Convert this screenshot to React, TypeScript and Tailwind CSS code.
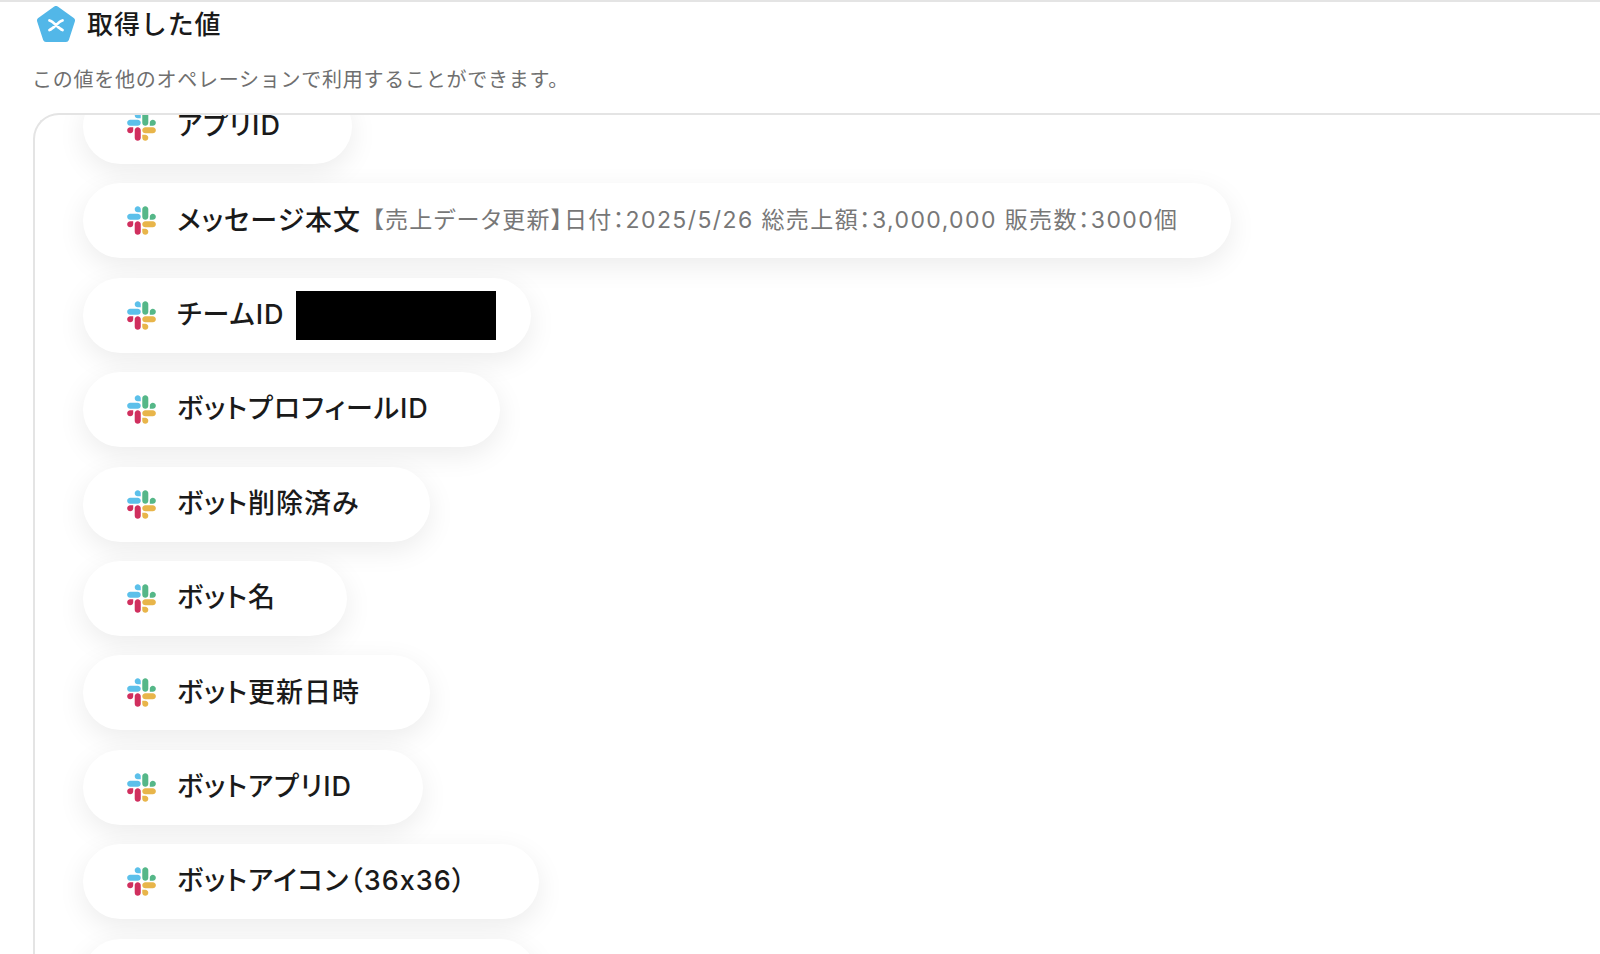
const rows = [
  { label: "アプリID", width: 269 },
  {
    label: "メッセージ本文",
    width: 1148,
    value: "【売上データ更新】日付：2025/5/26 総売上額：3,000,000 販売数：3000個",
  },
  { label: "チームID", width: 448, redacted: true },
  { label: "ボットプロフィールID", width: 417 },
  { label: "ボット削除済み", width: 347 },
  { label: "ボット名", width: 264 },
  { label: "ボット更新日時", width: 347 },
  { label: "ボットアプリID", width: 340 },
  { label: "ボットアイコン（36x36）", width: 456 },
  { label: "ボットアイコン（48x48）", width: 454 },
];

function SlackLogo() {
  return (
    <svg viewBox="0 0 127 127" className="h-[29px] w-[29px] shrink-0">
      <path
        fill="#D02F5E"
        d="M27.2 80c0 7.3-5.9 13.2-13.2 13.2C6.7 93.2.8 87.3.8 80c0-7.3 5.9-13.2 13.2-13.2h13.2V80zm6.6 0c0-7.3 5.9-13.2 13.2-13.2 7.3 0 13.2 5.9 13.2 13.2v33c0 7.3-5.9 13.2-13.2 13.2-7.3 0-13.2-5.9-13.2-13.2V80z"
      />
      <path
        fill="#5CC0EA"
        d="M47 27c-7.3 0-13.2-5.9-13.2-13.2C33.8 6.5 39.7.6 47 .6c7.3 0 13.2 5.9 13.2 13.2V27H47zm0 6.7c7.3 0 13.2 5.9 13.2 13.2 0 7.3-5.9 13.2-13.2 13.2H13.9C6.6 60.1.7 54.2.7 46.9c0-7.3 5.9-13.2 13.2-13.2H47z"
      />
      <path
        fill="#55B788"
        d="M99.9 46.9c0-7.3 5.9-13.2 13.2-13.2 7.3 0 13.2 5.9 13.2 13.2 0 7.3-5.9 13.2-13.2 13.2H99.9V46.9zm-6.6 0c0 7.3-5.9 13.2-13.2 13.2-7.3 0-13.2-5.9-13.2-13.2V13.8C66.9 6.5 72.8.6 80.1.6c7.3 0 13.2 5.9 13.2 13.2v33.1z"
      />
      <path
        fill="#E8B54A"
        d="M80.1 99.8c7.3 0 13.2 5.9 13.2 13.2 0 7.3-5.9 13.2-13.2 13.2-7.3 0-13.2-5.9-13.2-13.2V99.8h13.2zm0-6.6c-7.3 0-13.2-5.9-13.2-13.2 0-7.3 5.9-13.2 13.2-13.2h33.1c7.3 0 13.2 5.9 13.2 13.2 0 7.3-5.9 13.2-13.2 13.2H80.1z"
      />
    </svg>
  );
}

function ValueIcon() {
  return (
    <svg viewBox="0 0 40 38" className="h-[38px] w-[40px] shrink-0">
      <path
        d="M20 3 L36 14.5 L30 33 L10 33 L4 14.5 Z"
        fill="#52B7E8"
        stroke="#52B7E8"
        strokeWidth="6"
        strokeLinejoin="round"
      />
      <path
        d="M13.5 14.5 C18 15.5 22 22.5 26.5 24 M26.5 14.5 C22 15.5 18 22.5 13.5 24"
        fill="none"
        stroke="#fff"
        strokeWidth="2.8"
        strokeLinecap="round"
      />
    </svg>
  );
}

export default function App() {
  return (
    <div className="h-[954px] w-[1600px] overflow-hidden border-t-2 border-[#e4e4e4] bg-white font-['Inter','Noto_Sans_CJK_JP',sans-serif]">
      <div className="flex h-[44px] items-center gap-[11px] pl-[36px] pt-[2px]">
        <ValueIcon />
        <h1 className="pb-[2px] text-[26px] font-medium tracking-[0.9px] text-[#1a1a1a]">
          取得した値
        </h1>
      </div>
      <p className="mt-[19px] pl-[32px] text-[20px] leading-[30px] tracking-[0.75px] text-[#6f6f6f]">
        この値を他のオペレーションで利用することができます。
      </p>
      <div className="ml-[33px] mt-[18px] h-[900px] overflow-hidden rounded-tl-[26px] border-l-2 border-t-2 border-[#e4e4e4]">
        <div className="-mt-[26px] flex flex-col items-start gap-[19.4px] pl-[48px]">
          {rows.map((row) => (
            <div
              key={row.label}
              style={{ width: row.width }}
              className="flex h-[75px] shrink-0 items-center rounded-[38px] bg-white pl-[44px] shadow-[0_8px_28px_rgba(0,0,0,0.08)]"
            >
              <SlackLogo />
              <span className="ml-[21px] whitespace-nowrap text-[27px] font-medium tracking-[1px] text-[#1a1a1a] [font-feature-settings:'palt']">
                {row.label}
              </span>
              {row.value && (
                <span className="ml-[11px] whitespace-nowrap pb-[2px] text-[23px] tracking-[1.4px] text-[#777777] [font-feature-settings:'palt']">
                  {row.value}
                </span>
              )}
              {row.redacted && (
                <div className="ml-[11px] h-[49px] w-[200px] bg-black" />
              )}
            </div>
          ))}
        </div>
      </div>
    </div>
  );
}
